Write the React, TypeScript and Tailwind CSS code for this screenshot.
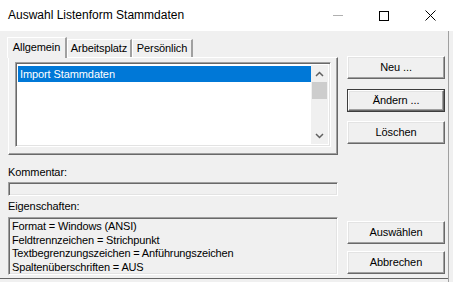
import React from "react";

const raised =
  "border border-t-white border-l-white border-r-[#696969] border-b-[#696969] shadow-[inset_-1px_-1px_0_#a0a0a0,inset_1px_1px_0_#e3e3e3]";
const sunken =
  "border border-t-[#a0a0a0] border-l-[#a0a0a0] border-r-white border-b-white shadow-[inset_1px_1px_0_#696969,inset_-1px_-1px_0_#e3e3e3]";

function Btn({ label, def = false, cls = "" }: { label: string; def?: boolean; cls?: string }) {
  if (def) {
    return (
      <div className={`h-[23px] w-[98px] border border-[#3c3c3c] ${cls}`}>
        <div className={`h-full w-full flex items-center justify-center bg-[#f0f0f0] ${raised}`}>{label}</div>
      </div>
    );
  }
  return (
    <div className={`h-[23px] w-[98px] flex items-center justify-center bg-[#f0f0f0] ${raised} ${cls}`}>{label}</div>
  );
}

export default function App() {
  return (
    <div className="w-[453px] h-[282px] bg-[#f0f0f0] overflow-hidden flex flex-col font-['Liberation_Sans',Arial,sans-serif] text-[11px] text-black leading-[13px] tracking-[-0.1px]">
      {/* Title bar */}
      <div className="h-[31px] bg-white flex items-center shrink-0 tracking-normal">
        <div className="pl-[8px] text-[12px] flex-1">Auswahl Listenform Stammdaten</div>
        <div className="w-[46px] h-[31px] flex items-center justify-center">
          <div className="w-[10px] h-px bg-[#b0b0b0]" />
        </div>
        <div className="w-[46px] h-[31px] flex items-center justify-center">
          <div className="w-[10px] h-[10px] border border-black" />
        </div>
        <div className="w-[46px] h-[31px] flex items-center justify-center">
          <svg width="11" height="11" viewBox="0 0 11 11">
            <path d="M0.5 0.5 L10.5 10.5 M10.5 0.5 L0.5 10.5" stroke="#000" strokeWidth="1" />
          </svg>
        </div>
      </div>

      <div className="flex flex-1">
        <div className="w-[448px] flex flex-col">
          {/* Body */}
          <div className="flex flex-1 pl-[8px]">
            {/* Left column */}
            <div className="w-[330px] flex flex-col">
              {/* Tabs */}
              <div className="h-[20px] mt-[6px] flex items-end -ml-px">
                <div className="relative z-10 h-[21px] -mb-px w-[60px] bg-[#f0f0f0] border-l border-t border-white border-r-2 border-r-[#a0a0a0] flex items-start justify-center pt-[3px]">
                  Allgemein
                </div>
                <div className="h-[18px] w-[65px] border-l border-t border-white border-r-2 border-r-[#a0a0a0] flex items-start justify-center pt-[2px]">
                  Arbeitsplatz
                </div>
                <div className="h-[18px] w-[61px] border-l border-t border-white border-r-2 border-r-[#a0a0a0] flex items-start justify-center pt-[2px]">
                  Persönlich
                </div>
              </div>
              {/* Tab panel */}
              <div className="h-[98px] border border-t-white border-l-white border-r-[#696969] border-b-[#696969] shadow-[inset_-1px_-1px_0_#a0a0a0] pl-[6px] pt-[4px]">
                <div className={`w-[316px] h-[85px] bg-white flex p-[2px] ${sunken}`}>
                  <div className="flex-1 pt-[1px]">
                    <div className="h-[16px] bg-[#0078d7] text-white flex items-center pl-[2px]">Import Stammdaten</div>
                  </div>
                  <div className="w-[17px] bg-[#f0f0f0] flex flex-col items-center">
                    <div className="h-[17px] w-full flex items-center justify-center">
                      <svg width="9" height="6" viewBox="0 0 9 6">
                        <path d="M1 5 L4.5 1.5 L8 5" stroke="#606060" strokeWidth="1.5" fill="none" />
                      </svg>
                    </div>
                    <div className="h-[17px] w-[15px] bg-[#cdcdcd]" />
                    <div className="flex-1" />
                    <div className="h-[17px] w-full flex items-center justify-center">
                      <svg width="9" height="6" viewBox="0 0 9 6">
                        <path d="M1 1 L4.5 4.5 L8 1" stroke="#606060" strokeWidth="1.5" fill="none" />
                      </svg>
                    </div>
                  </div>
                </div>
              </div>
              <div className="mt-[11px] h-[13px]">Kommentar:</div>
              <div className={`mt-[3px] h-[14px] w-[330px] bg-[#f0f0f0] ${sunken}`} />
              <div className="mt-[4px] h-[13px]">Eigenschaften:</div>
              <div className={`mt-[4px] h-[58px] w-[330px] bg-[#f0f0f0] pl-[3px] pt-[2px] tracking-[-0.15px] ${sunken}`}>
                <div className="leading-[13.5px]">Format = Windows (ANSI)</div>
                <div className="leading-[13.5px]">Feldtrennzeichen = Strichpunkt</div>
                <div className="leading-[13.5px]">Textbegrenzungszeichen = Anführungszeichen</div>
                <div className="leading-[13.5px]">Spaltenüberschriften = AUS</div>
              </div>
            </div>
            {/* Right column */}
            <div className="ml-[9px] w-[98px] flex flex-col">
              <Btn label="Neu ..." cls="mt-[25px]" />
              <Btn label="Ändern ..." def cls="mt-[10px]" />
              <Btn label="Löschen" cls="mt-[9px]" />
              <Btn label="Auswählen" cls="mt-[77px]" />
              <Btn label="Abbrechen" cls="mt-[7px]" />
            </div>
          </div>
          <div className="h-px bg-[#646464] shrink-0" />
          <div className="h-[3px] shrink-0" />
        </div>
        <div className="w-px bg-[#a0a0a0]" />
      </div>
    </div>
  );
}
